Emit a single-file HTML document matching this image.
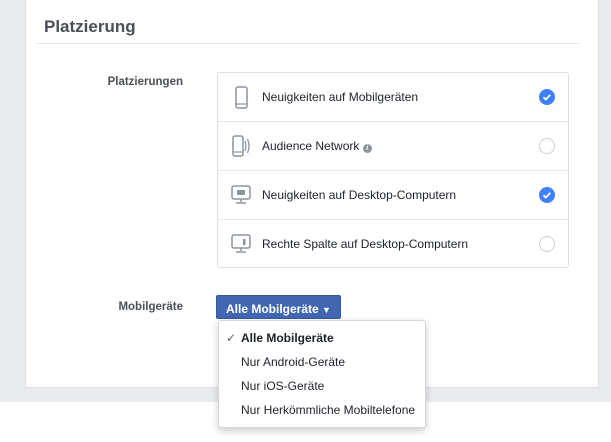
<!DOCTYPE html>
<html><head><meta charset="utf-8"><style>
*{margin:0;padding:0;box-sizing:border-box}
body{width:611px;height:442px;background:#fff;font-family:"Liberation Sans",Arial,sans-serif;position:relative;overflow:hidden}
.bg{position:absolute;left:0;top:0;width:611px;height:402px;background:#e9ebee}
.card{position:absolute;left:25px;top:0;width:574px;height:388px;background:#fff;border:1px solid #dddfe2;border-top:none}
.h{position:absolute;left:44px;top:17px;font-size:17px;font-weight:bold;color:#4b4f56}
.hl{position:absolute;left:36px;top:43px;width:544px;height:1px;background:#e5e5e5}
.lbl{position:absolute;right:428px;font-size:11.5px;font-weight:bold;color:#4b4f56}
.box{position:absolute;left:217px;top:72px;width:352px;height:196px;border:1px solid #dddfe2;border-radius:3px}
.row{position:absolute;left:0;width:350px;height:49px;border-bottom:1px solid #e5e5e5}
.row span{position:absolute;left:44px;top:17px;font-size:12px;color:#1d2129}
.row svg{position:absolute}
.ck{position:absolute;left:321px;top:16px;width:16px;height:16px;border-radius:50%;background:#4080ff}
.rd{position:absolute;left:321px;top:16px;width:16px;height:16px;border-radius:50%;border:1px solid #ccd0d5}
.btn{position:absolute;left:216px;top:295px;width:125px;height:24px;background:#4267b2;border:1px solid #365899;border-radius:2px;color:#fff;font-size:12px;font-weight:bold;padding:6px 0 0 9px}
.dd{position:absolute;left:218px;top:320px;width:208px;height:108px;background:#fff;border:1px solid #d5d7da;border-radius:3px;box-shadow:0 3px 8px rgba(0,0,0,.2)}
.dd div{position:absolute;left:22px;font-size:12px;color:#1d2129}
</style></head><body>
<div class="bg"></div>
<div class="card"></div>
<div class="h">Platzierung</div>
<div class="hl"></div>
<div class="lbl" style="top:76px">Platzierungen</div>
<div class="lbl" style="top:301px">Mobilgeräte</div>
<div class="box">
 <div class="row" style="top:0">
  <svg style="left:17px;top:13px" width="13" height="23" viewBox="0 0 13 23"><rect x="1" y="1" width="11" height="21" rx="2" fill="none" stroke="#8d949e" stroke-width="1.5"/><line x1="1" y1="18" x2="12" y2="18" stroke="#8d949e" stroke-width="1.2"/></svg>
  <span>Neuigkeiten auf Mobilgeräten</span><div class="ck"><svg width="16" height="16"><path d="M4.5 8.3l2.3 2.2 4.5-4.6" fill="none" stroke="#fff" stroke-width="1.8"/></svg></div></div>
 <div class="row" style="top:49px">
  <svg style="left:14px;top:13px" width="18" height="22" viewBox="0 0 18 22"><rect x="1" y="1" width="10" height="20" rx="2" fill="none" stroke="#8d949e" stroke-width="1.5"/><line x1="1" y1="17" x2="11" y2="17" stroke="#8d949e" stroke-width="1.2"/><path d="M13 6q2 5 0 10M15.5 4q3 7 0 14" fill="none" stroke="#8d949e" stroke-width="1.3"/></svg>
  <span>Audience Network <span style="position:static;display:inline-block;width:9px;height:9px;border-radius:50%;background:#90949c;color:#fff;font-size:7px;text-align:center;line-height:9px;font-weight:bold;font-style:italic">i</span></span><div class="rd"></div></div>
 <div class="row" style="top:98px">
  <svg style="left:13px;top:14px" width="20" height="20" viewBox="0 0 20 20"><rect x="1" y="1" width="18" height="13" rx="2" fill="none" stroke="#8d949e" stroke-width="1.5"/><rect x="6" y="5" width="8" height="5" fill="#8d949e"/><path d="M10 14v3M5 18h10" stroke="#8d949e" stroke-width="1.5"/></svg>
  <span>Neuigkeiten auf Desktop-Computern</span><div class="ck"><svg width="16" height="16"><path d="M4.5 8.3l2.3 2.2 4.5-4.6" fill="none" stroke="#fff" stroke-width="1.8"/></svg></div></div>
 <div class="row" style="top:147px;border-bottom:none">
  <svg style="left:13px;top:14px" width="20" height="20" viewBox="0 0 20 20"><rect x="1" y="1" width="18" height="13" rx="2" fill="none" stroke="#8d949e" stroke-width="1.5"/><rect x="12" y="5" width="2.5" height="6" fill="#8d949e"/><path d="M10 14v3M5 18h10" stroke="#8d949e" stroke-width="1.5"/></svg>
  <span>Rechte Spalte auf Desktop-Computern</span><div class="rd"></div></div>
</div>
<div class="btn">Alle Mobilgeräte <span style="font-size:9px">▼</span></div>
<div class="dd">
 <div style="left:7px;top:10px;color:#606770">✓</div>
 <div style="top:10px;font-weight:bold">Alle Mobilgeräte</div>
 <div style="top:34px">Nur Android-Geräte</div>
 <div style="top:58px">Nur iOS-Geräte</div>
 <div style="top:82px">Nur Herkömmliche Mobiltelefone</div>
</div>
</body></html>
